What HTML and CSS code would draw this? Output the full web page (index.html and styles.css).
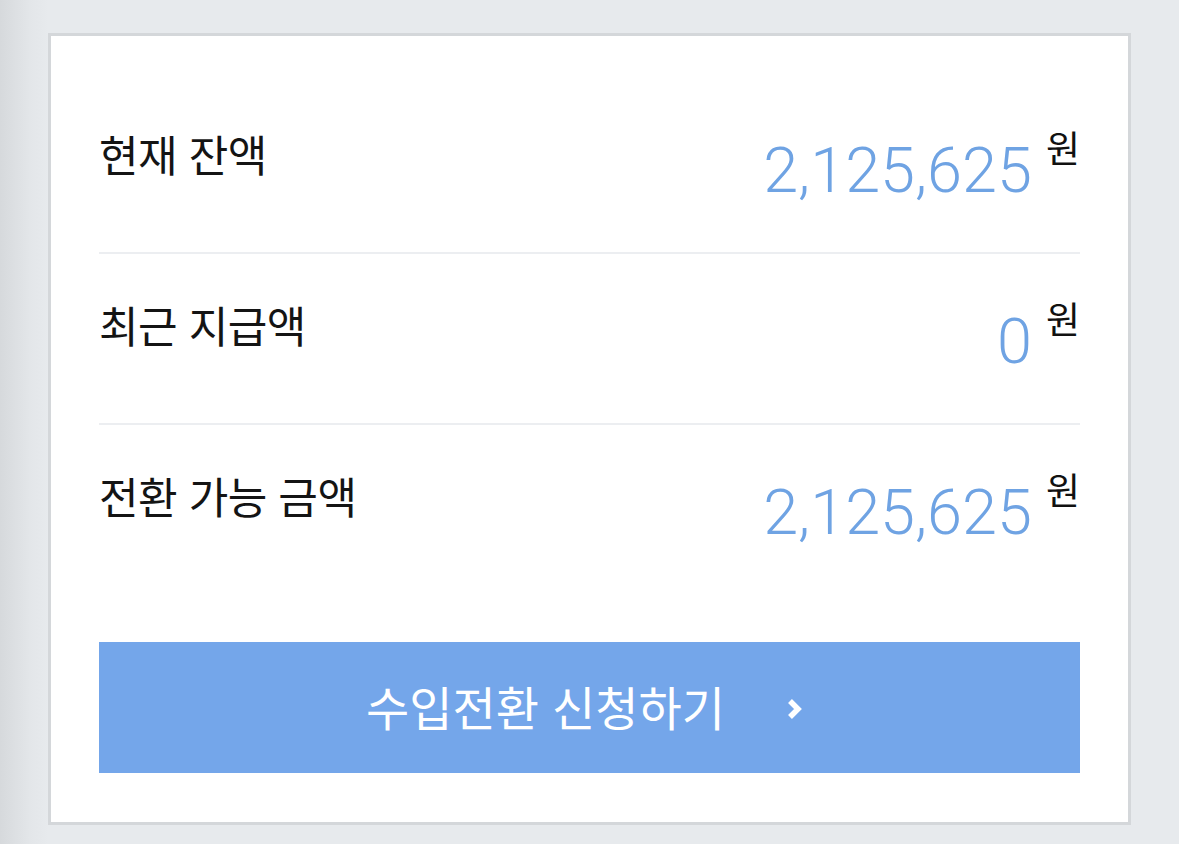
FILE: index.html
```html
<!DOCTYPE html>
<html lang="ko">
<head>
<meta charset="utf-8">
<link rel="stylesheet" href="styles.css">
</head>
<body>
<div class="page">
  <section class="card">
    <div class="row">
      <span class="label">현재 잔액</span>
      <span class="amount"><span class="num">2,125,625</span><span class="unit">원</span></span>
    </div>
    <div class="row">
      <span class="label">최근 지급액</span>
      <span class="amount"><span class="num">0</span><span class="unit">원</span></span>
    </div>
    <div class="row last">
      <span class="label">전환 가능 금액</span>
      <span class="amount"><span class="num">2,125,625</span><span class="unit">원</span></span>
    </div>
    <button class="cta" type="button">
      <span class="cta-text">수입전환 신청하기</span>
      <svg class="chev" width="16" height="24" viewBox="0 0 16 24"><path d="M3 4 L11 12 L3 20" fill="none" stroke="#fff" stroke-width="5.5" stroke-linejoin="miter"/></svg>
    </button>
  </section>
</div>
</body>
</html>
```
FILE: styles.css
```css
html, body {
  margin: 0;
  padding: 0;
}
body {
  width: 1179px;
  height: 844px;
  overflow: hidden;
  background: linear-gradient(to right, #d6d9dc 0px, #e3e6e9 30px, #e7eaed 48px, #e7eaed 100%);
  font-family: "Noto Sans CJK KR", "Noto Sans", sans-serif;
}
.page {
  padding: 33px 0 0 48px;
}
.card {
  box-sizing: border-box;
  width: 1083px;
  height: 792px;
  background: #ffffff;
  border: 3px solid #d4d7da;
  padding: 47px 48px 0 48px;
  display: flex;
  flex-direction: column;
}
.row {
  box-sizing: border-box;
  height: 171px;
  border-bottom: 2px solid #eceef1;
  display: flex;
  justify-content: space-between;
  align-items: flex-start;
  padding-top: 44px;
}
.row.last {
  border-bottom: none;
  height: 169px;
}
.label {
  font-size: 43px;
  color: #141414;
  line-height: 52px;
  letter-spacing: -0.5px;
}
.amount {
  display: flex;
  align-items: flex-start;
}
.num {
  font-family: "Roboto", "Liberation Sans", sans-serif;
  font-weight: 300;
  font-size: 63px;
  color: #6fa3e3;
  line-height: 74px;
  margin-top: 7px;
}
.unit {
  font-size: 37px;
  color: #111;
  line-height: 40px;
  margin-left: 14px;
  margin-top: 0px;
}
.cta {
  margin-top: 48px;
  height: 131px;
  width: 100%;
  border: none;
  background: #74a6ea;
  color: #fff;
  font-family: "Noto Sans CJK KR", "Noto Sans", sans-serif;
  font-size: 47px;
  display: flex;
  align-items: center;
  justify-content: center;
  gap: 62px;
  padding: 0 10px 4px 0;
}
.cta-text {
  line-height: 1;
}
.chev {
  display: block;
  margin-top: 6px;
}
```
